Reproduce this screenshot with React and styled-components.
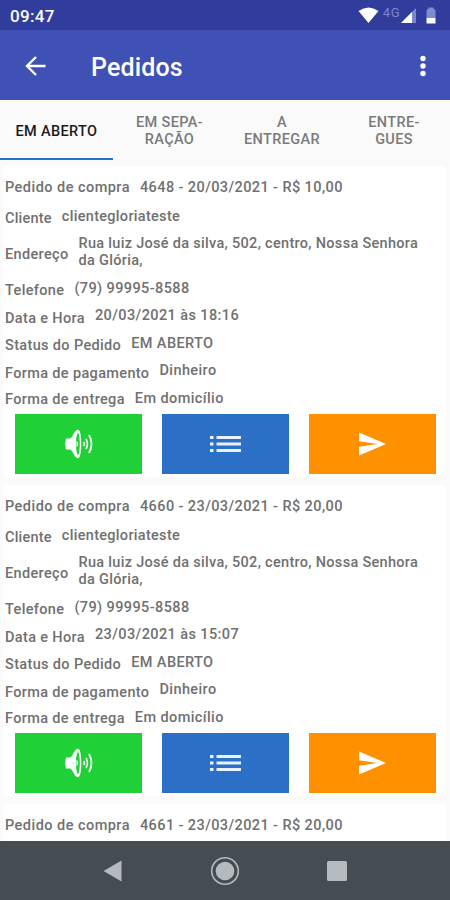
import React, { useState } from "react"
import styled, { createGlobalStyle } from "styled-components"

const GlobalStyle = createGlobalStyle`
  * {
    box-sizing: border-box;
  }
  body {
    margin: 0;
    background: #fafafa;
    font-family: Roboto, "Liberation Sans", sans-serif;
  }
  svg {
    display: block;
  }
`

const Screen = styled.div`
  display: flex;
  flex-direction: column;
  height: 900px;
  overflow: hidden;
  background: #fafafa;
`

const StatusBar = styled.div`
  flex: none;
  display: flex;
  align-items: center;
  justify-content: space-between;
  height: 30px;
  padding: 2px 14px 0 10px;
  background: #303d9d;
  color: #fff;
`

const Clock = styled.span`
  font-size: 17px;
  font-weight: 500;
  line-height: 20px;
  letter-spacing: 0.3px;
`

const StatusIcons = styled.div`
  display: flex;
  align-items: flex-start;
  height: 18px;
`

const Network = styled.span`
  margin: -1px 1px 0 4px;
  font-size: 13px;
  line-height: 14px;
  letter-spacing: 0.5px;
  color: #7c86cc;
`

const Toolbar = styled.header`
  flex: none;
  display: flex;
  align-items: center;
  height: 70px;
  padding: 2px 19px 0 25px;
  background: #3f51b5;
  color: #fff;
`

const IconButton = styled.button`
  padding: 0;
  border: 0;
  background: none;
  color: inherit;
  cursor: pointer;
`

const Title = styled.h1`
  flex: 1;
  margin: 3px 0 0 45px;
  font-size: 25px;
  font-weight: 500;
  line-height: 30px;
  letter-spacing: 0.15px;
`

const Tabs = styled.nav`
  flex: none;
  display: grid;
  grid-template-columns: 113px 113px 112px 112px;
  height: 60px;
`

const Tab = styled.button`
  padding: ${props => (props.$active ? 5 : 4)}px 0 0;
  border: 0;
  border-bottom: 2px solid ${props => (props.$active ? "#2c6fc6" : "transparent")};
  background: none;
  color: ${props => (props.$active ? "#1c1c1c" : "#7a7a7a")};
  font-family: inherit;
  font-size: 14.5px;
  font-weight: 500;
  line-height: 17.5px;
  letter-spacing: 0.35px;
  white-space: pre-line;
  cursor: pointer;
`

const List = styled.main`
  flex: 1;
  min-height: 0;
  overflow: hidden;
  padding: 6px 4px 0 3px;
`

const Card = styled.article`
  min-height: 45px;
  margin-bottom: 8.5px;
  padding: 8px 7px 3px 2px;
  border-radius: 3px;
  background: #fff;
`

const Row = styled.div`
  display: flex;
  align-items: center;
  height: ${props => props.$height || 27.5}px;
  margin-bottom: ${props => props.$gap || 0}px;
  color: #707070;
  font-size: 14.5px;
  font-weight: 500;
  line-height: 17.5px;
`

const Label = styled.span`
  flex: none;
  margin-right: 10px;
  padding-top: ${props => props.$drop}px;
  letter-spacing: ${props => props.$spacing}px;
`

const Value = styled.span`
  letter-spacing: ${props => props.$spacing}px;
  white-space: pre-line;
`

const Actions = styled.div`
  display: grid;
  grid-template-columns: repeat(3, 127px);
  gap: 20px;
  padding: 2px 0 0 10px;
`

const Action = styled.button`
  display: flex;
  align-items: center;
  justify-content: center;
  height: 59.5px;
  padding: 0;
  border: 0;
  background: ${props => props.$color};
  cursor: pointer;
`

const NavBar = styled.footer`
  flex: none;
  display: grid;
  grid-template-columns: repeat(3, 112px);
  justify-content: center;
  justify-items: center;
  align-items: center;
  height: 59px;
  background: #454c52;
`

const Battery = styled.svg`
  margin-left: 10px;
`

const WifiIcon = () => (
  <svg width="21" height="17" viewBox="0 0 21 17" fill="#fff">
    <path d="M0.5 4Q10.5-3 20.5 4L10.5 16Z" />
  </svg>
)

const SignalIcon = () => (
  <svg width="15" height="17" viewBox="0 0 15 17">
    <path d="M15 1V16H0Z" fill="#7c86cc" />
    <path d="M11 5V16H0Z" fill="#fff" />
  </svg>
)

const BatteryIcon = () => (
  <Battery width="10" height="17" viewBox="0 0 10 17">
    <path d="M0.5 4Q0.5 2 2.5 1.5V0.5H7.5V1.5Q9.5 2 9.5 4V11H0.5Z" fill="#8189cf" />
    <path d="M0.5 11H9.5V16.5H0.5Z" fill="#fff" />
  </Battery>
)

const BackIcon = () => (
  <svg width="21" height="20" viewBox="0 0 21 20" fill="none" stroke="#fff" strokeWidth="2.4">
    <path d="M11 1L2 10L11 19M2 10H20.5" />
  </svg>
)

const MoreIcon = () => (
  <svg width="16" height="22" viewBox="0 0 16 22" fill="#fff">
    <circle cx="8" cy="3.5" r="2.7" />
    <circle cx="8" cy="11" r="2.7" />
    <circle cx="8" cy="18.5" r="2.7" />
  </svg>
)

const SpeakerIcon = () => (
  <svg width="28" height="30" viewBox="0 0 28 30" fill="none" stroke="#fff">
    <path
      d="M1 9.5H5C8.5 8 9 1 13 0.8C15 0.8 16.3 6 16.3 15S15 29.2 13 29.2C9 29 8.5 22 5 20.5H1Q-0.3 15 1 9.5Z"
      fill="#fff"
      stroke="none"
    />
    <path d="M13 3.5C10.2 8 10.2 22 13 26.5C15.4 22 15.4 8 13 3.5Z" fill="#1fd136" stroke="none" />
    <path d="M11.5 11.5Q15 15 11.5 18.5Z" fill="#fff" stroke="none" />
    <path d="M18.8 13Q20 15 18.8 17" strokeWidth="1.7" />
    <path d="M21 9.8Q23.8 15 21 20.2" strokeWidth="1.6" />
    <path d="M24 6Q29 15 24 24" strokeWidth="1.8" />
  </svg>
)

const ListIcon = () => (
  <svg width="31" height="18" viewBox="0 0 31 18" fill="#e8f1fc">
    <path d="M0 1H3.5V4H0ZM0 7.5H3.5V10.5H0ZM0 14H3.5V17H0Z" />
    <path d="M6.5 1H31V4H6.5ZM6.5 7.5H31V10.5H6.5ZM6.5 14H31V17H6.5Z" />
  </svg>
)

const SendIcon = () => (
  <svg width="27" height="24" viewBox="0 0 27 24" fill="#fff">
    <path d="M0 0.5L27 12L0 23.5V14.8L18.5 12L0 9.2Z" />
  </svg>
)

const tabs = ["EM ABERTO", "EM SEPA-\nRAÇÃO", "A\nENTREGAR", "ENTRE-\nGUES"]

const orders = [
  { id: 4648, date: "20/03/2021", time: "18:16", total: "10,00" },
  { id: 4660, date: "23/03/2021", time: "15:07", total: "20,00" },
  { id: 4661, date: "23/03/2021", total: "20,00" },
]

const Field = ({ label, drop = 5, height, gap, labelSpacing = 0.35, spacing = 0.4, children }) => (
  <Row $height={height} $gap={gap}>
    <Label $drop={drop} $spacing={labelSpacing}>
      {label}
    </Label>
    <Value $spacing={spacing}>{children}</Value>
  </Row>
)

const OrderDetails = ({ order }) => (
  <>
    <Field label="Cliente" labelSpacing={0.22} spacing={0.3}>
      clientegloriateste
    </Field>
    <Field label="Endereço" height={44.5} spacing={0.3}>
      {"Rua luiz José da silva, 502, centro, Nossa Senhora\nda Glória,"}
    </Field>
    <Field label="Telefone">(79) 99995-8588</Field>
    <Field label="Data e Hora">{`${order.date} às ${order.time}`}</Field>
    <Field label="Status do Pedido">EM ABERTO</Field>
    <Field label="Forma de pagamento">Dinheiro</Field>
    <Field label="Forma de entrega" drop={2}>
      Em domicílio
    </Field>
    <Actions>
      <Action $color="#1fd136" aria-label="Avisar">
        <SpeakerIcon />
      </Action>
      <Action $color="#2c6fc6" aria-label="Itens">
        <ListIcon />
      </Action>
      <Action $color="#ff9100" aria-label="Enviar">
        <SendIcon />
      </Action>
    </Actions>
  </>
)

const Order = ({ order }) => (
  <Card>
    <Field label="Pedido de compra" drop={0} gap={1} labelSpacing={0.46}>
      {`${order.id} - ${order.date} - R$ ${order.total}`}
    </Field>
    {order.time && <OrderDetails order={order} />}
  </Card>
)

const App = () => {
  const [active, setActive] = useState(0)

  return (
    <Screen>
      <GlobalStyle />
      <StatusBar>
        <Clock>09:47</Clock>
        <StatusIcons>
          <WifiIcon />
          <Network>4G</Network>
          <SignalIcon />
          <BatteryIcon />
        </StatusIcons>
      </StatusBar>
      <Toolbar>
        <IconButton aria-label="Voltar">
          <BackIcon />
        </IconButton>
        <Title>Pedidos</Title>
        <IconButton aria-label="Mais">
          <MoreIcon />
        </IconButton>
      </Toolbar>
      <Tabs>
        {tabs.map((tab, i) => (
          <Tab key={tab} $active={i === active} onClick={() => setActive(i)}>
            {tab}
          </Tab>
        ))}
      </Tabs>
      <List>
        {orders.map(order => (
          <Order key={order.id} order={order} />
        ))}
      </List>
      <NavBar>
        <svg width="20" height="22" viewBox="0 0 20 22" fill="#b4babd">
          <path d="M0.5 11L18.5 0.5V21.5Z" />
        </svg>
        <svg width="30" height="30" viewBox="0 0 30 30">
          <circle cx="15" cy="15" r="13.3" fill="none" stroke="#b4babd" strokeWidth="1.6" />
          <circle cx="15" cy="15" r="9.3" fill="#b4babd" />
        </svg>
        <svg width="20" height="20" viewBox="0 0 20 20" fill="#b4babd">
          <rect width="20" height="20" rx="1.5" />
        </svg>
      </NavBar>
    </Screen>
  )
}

export default App
